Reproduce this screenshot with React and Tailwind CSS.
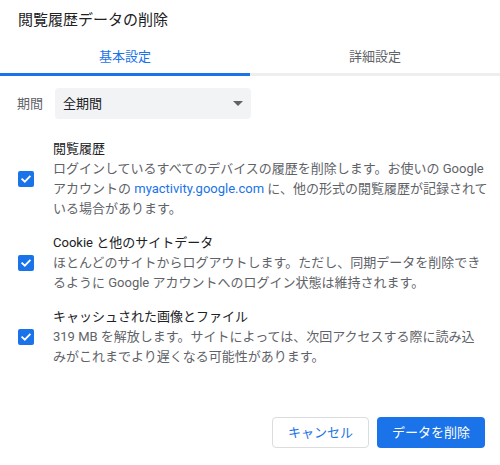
import React from "react";

const Check = () => (
  <div className="w-[16px] h-[16px] shrink-0 rounded-[2px] bg-[#1a73e8] flex items-center justify-center">
    <svg width="12" height="12" viewBox="0 0 12 12" fill="none">
      <path d="M2.2 6.2 L4.8 8.7 L9.8 3.6" stroke="white" strokeWidth="1.8" strokeLinecap="square" strokeLinejoin="miter" />
    </svg>
  </div>
);

const Item = ({ title, lines }) => (
  <div className="flex items-center pl-[18px]">
    <Check />
    <div className="ml-[19px] text-[13px] leading-[20px] whitespace-nowrap">
      <div className="text-[#202124]">{title}</div>
      {lines.map((l, i) => (
        <div key={i} className="text-[#5f6368]">{l}</div>
      ))}
    </div>
  </div>
);

export default function App() {
  return (
    <div
      className="w-[500px] h-[465px] bg-white flex flex-col overflow-hidden"
      style={{ fontFamily: 'Roboto, "Noto Sans CJK JP", sans-serif' }}
    >
      <div className="h-[40px] pl-[18px] flex items-center text-[15px] text-[#202124]">
        閲覧履歴データの削除
      </div>
      <div className="flex h-[36px]">
        <div className="flex-1 flex items-center justify-center text-[13px] text-[#1a73e8] border-b-[3px] border-[#1a73e8]">
          基本設定
        </div>
        <div className="flex-1 flex items-center justify-center text-[13px] text-[#5f6368] border-b-[3px] border-[#eeeeee]">
          詳細設定
        </div>
      </div>
      <div className="flex items-center pl-[17px] mt-[12px]">
        <div className="w-[38px] text-[13px] text-[#5f6368]">期間</div>
        <div className="w-[196px] h-[31px] bg-[#f1f3f4] rounded-[4px] pl-[8px] pr-[8px] flex items-center justify-between">
          <span className="text-[13px] text-[#202124]">全期間</span>
          <svg width="10" height="5" viewBox="0 0 10 5">
            <path d="M0 0 L10 0 L5 5 Z" fill="#5f6368" />
          </svg>
        </div>
      </div>
      <div className="flex flex-col gap-[14px] mt-[20px]">
        <Item
          title="閲覧履歴"
          lines={[
            "ログインしているすべてのデバイスの履歴を削除します。お使いの Google",
            <>
              アカウントの <span className="text-[#1a73e8]">myactivity.google.com</span> に、他の形式の閲覧履歴が記録されて
            </>,
            "いる場合があります。",
          ]}
        />
        <Item
          title="Cookie と他のサイトデータ"
          lines={[
            "ほとんどのサイトからログアウトします。ただし、同期データを削除でき",
            "るように Google アカウントへのログイン状態は維持されます。",
          ]}
        />
        <Item
          title="キャッシュされた画像とファイル"
          lines={[
            "319 MB を解放します。サイトによっては、次回アクセスする際に読み込",
            "みがこれまでより遅くなる可能性があります。",
          ]}
        />
      </div>
      <div className="flex-1" />
      <div className="flex justify-end gap-[8px] pr-[15px] pb-[17px]">
        <button className="w-[97px] h-[31px] rounded-[4px] border border-[#dadce0] bg-white text-[13px] text-[#1a73e8] flex items-center justify-center">
          キャンセル
        </button>
        <button className="w-[108px] h-[31px] rounded-[4px] bg-[#1a73e8] text-[13px] text-white flex items-center justify-center">
          データを削除
        </button>
      </div>
    </div>
  );
}
